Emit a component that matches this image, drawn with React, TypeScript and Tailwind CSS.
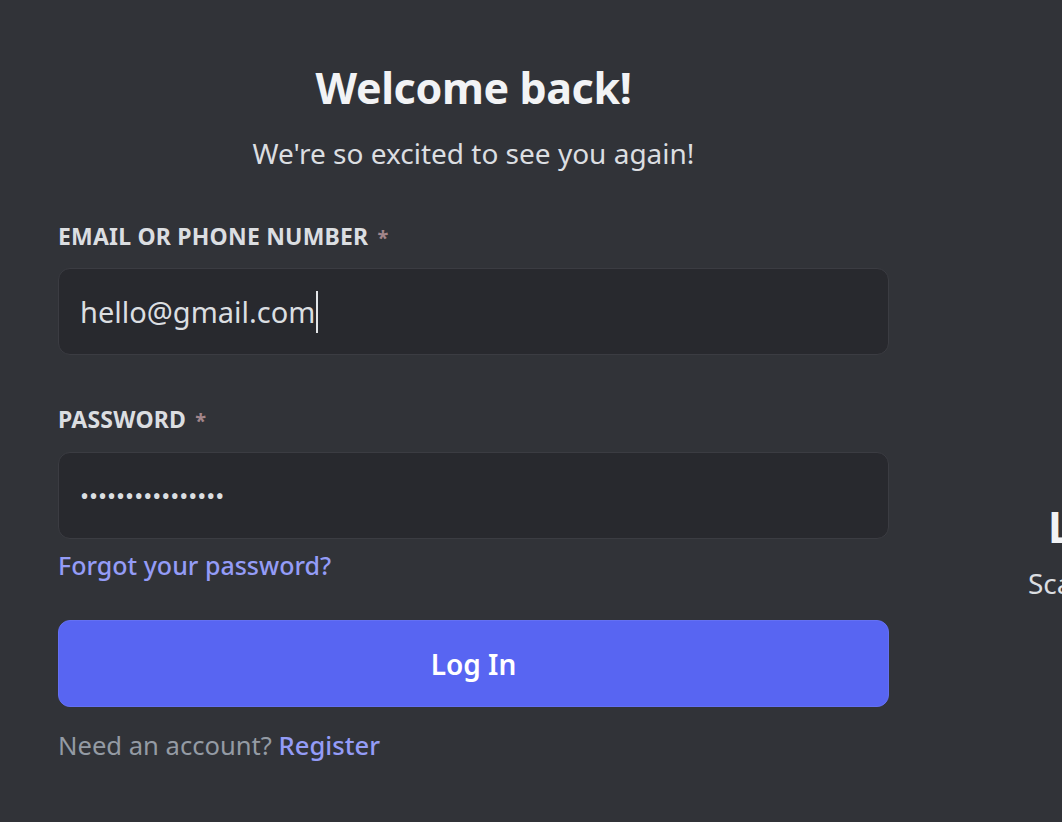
import React from "react";

export default function App() {
  const font = { fontFamily: '"Noto Sans", "Open Sans", sans-serif' };
  return (
    <div
      className="w-[1062px] h-[822px] bg-[#313338] overflow-hidden flex"
      style={font}
    >
      <div className="w-[889px] shrink-0 pl-[58px] pt-[63px] flex flex-col">
        <h1 className="text-center text-[43px] leading-[50px] font-bold text-[#f2f3f5] tracking-[-0.4px]">
          Welcome back!
        </h1>
        <p className="mt-[23px] text-center text-[28px] leading-[34px] text-[#dbdee1]">
          We're so excited to see you again!
        </p>

        <label className="mt-[53px] block h-[26px] text-[23px] leading-[26px] font-bold text-[#dbdee1] tracking-[0.2px]">
          EMAIL OR PHONE NUMBER
          <span className="text-[#a3868b] ml-[9px] text-[20px] leading-none">*</span>
        </label>
        <div className="mt-[19px] h-[87px] rounded-[12px] border border-[#3b3c42] bg-[#28292e] flex items-center px-[21px]">
          <span className="text-[29px] text-[#dbdee1] leading-none">hello@gmail.com</span>
          <span className="inline-block w-[2px] h-[42px] bg-[#e3e5e8] ml-[1px]" />
        </div>

        <label className="mt-[51px] block h-[26px] text-[23px] leading-[26px] font-bold text-[#dbdee1] tracking-[0.2px]">
          PASSWORD
          <span className="text-[#a3868b] ml-[9px] text-[20px] leading-none">*</span>
        </label>
        <div className="mt-[20px] h-[87px] rounded-[12px] border border-[#3b3c42] bg-[#28292e] flex items-center px-[21px]">
          <span className="text-[24px] text-[#dbdee1] leading-none">
            ••••••••••••••••
          </span>
        </div>

        <a className="mt-[11px] self-start text-[25px] leading-[30px] font-medium text-[#949cf7]">
          Forgot your password?
        </a>

        <button className="mt-[40px] h-[87px] rounded-[12px] bg-[#5865f2] border border-[#6470f3] text-white text-[28px] font-semibold">
          Log In
        </button>

        <p className="mt-[24px] text-[25.6px] leading-[30px] text-[#949ba4]">
          Need an account?{" "}
          <a className="text-[#949cf7] font-medium">Register</a>
        </p>
      </div>

      <div className="ml-[139px] shrink-0 w-[600px] pt-[502px] flex flex-col">
        <h2 className="pl-[20px] text-[43px] leading-[50px] font-bold text-[#f2f3f5] whitespace-nowrap">
          Log in with QR Code
        </h2>
        <p className="mt-[14px] text-[28px] leading-[34px] text-[#dbdee1] whitespace-nowrap">
          Scan this with the Discord mobile app to log in instantly.
        </p>
      </div>
    </div>
  );
}
